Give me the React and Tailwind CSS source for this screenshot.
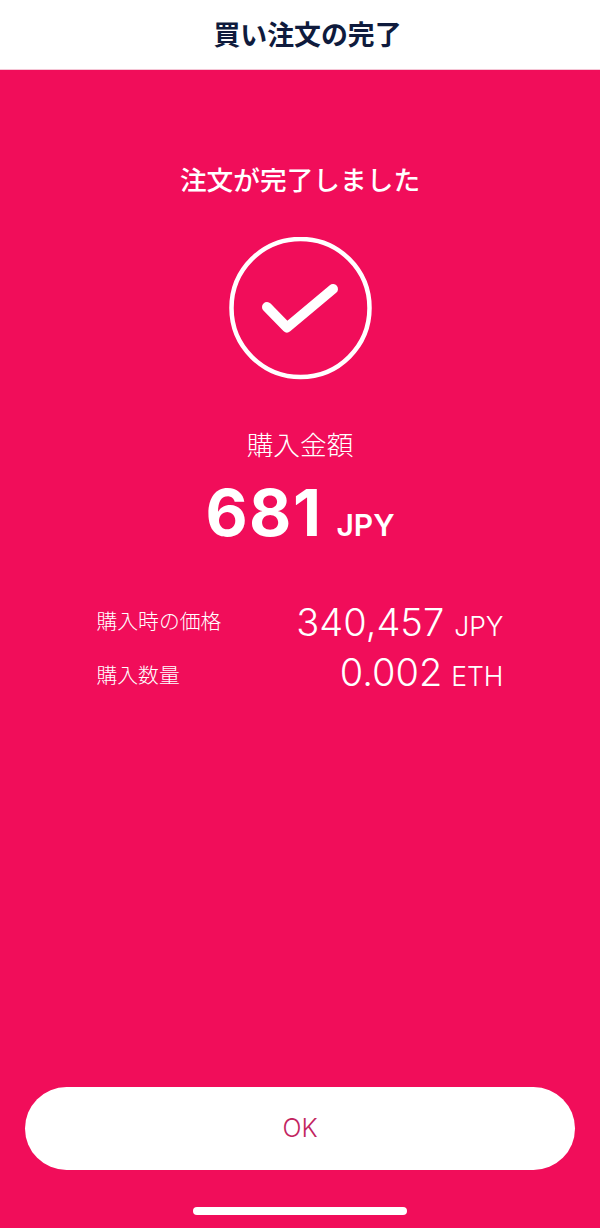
export default function App() {
  return (
    <div className="w-[600px] h-[1228px] flex flex-col bg-[#f10d5a] overflow-hidden font-['Inter','Noto_Sans_CJK_JP',sans-serif]">
      <header className="h-[70px] shrink-0 bg-white flex items-center justify-center border-b border-[#f5c6d6] pl-[15px] pt-[2px]">
        <h1 className="text-[26.9px] leading-none font-bold text-[#0f1b3d]">買い注文の完了</h1>
      </header>
      <main className="flex-1 flex flex-col items-center text-white">
        <p className="mt-[95px] text-[26.7px] leading-[30px] font-medium">注文が完了しました</p>
        <svg className="mt-[42px]" width="144" height="144" viewBox="0 0 144 144" fill="none">
          <circle cx="72.5" cy="71" r="69" stroke="white" strokeWidth="4.5" />
          <path d="M39 70 L59 90.5 L105 52" stroke="white" strokeWidth="10" strokeLinecap="round" strokeLinejoin="round" />
        </svg>
        <p className="mt-[48px] text-[26.7px] leading-[32px] font-light">購入金額</p>
        <div className="mt-[16px] flex items-baseline gap-[14px] leading-none">
          <span className="text-[65px] leading-[72px] font-bold tracking-[1.5px]">681</span>
          <span className="text-[30px] font-semibold">JPY</span>
        </div>
        <div className="mt-[51px] w-[407px] flex flex-col gap-[6px]">
          <div className="flex items-start justify-between h-[44px]">
            <span className="mt-[7px] text-[20.8px] leading-[30px] font-light">購入時の価格</span>
            <span className="flex items-baseline gap-[10px] leading-[44px]">
              <span className="text-[38px] font-light">340,457</span>
              <span className="text-[26.5px] font-light">JPY</span>
            </span>
          </div>
          <div className="flex items-start justify-between h-[44px]">
            <span className="mt-[11px] text-[20.8px] leading-[30px] font-light">購入数量</span>
            <span className="flex items-baseline gap-[9px] leading-[44px]">
              <span className="text-[38px] font-light">0.002</span>
              <span className="text-[26.5px] font-light">ETH</span>
            </span>
          </div>
        </div>
      </main>
      <footer className="shrink-0 flex flex-col items-center">
        <button className="w-[550px] h-[83px] rounded-[42px] bg-white text-[#c2245f] text-[25px] font-light pt-[1px]">OK</button>
        <div className="mt-[37px] mb-[13px] w-[214px] h-[8px] rounded-full bg-white" />
      </footer>
    </div>
  );
}
